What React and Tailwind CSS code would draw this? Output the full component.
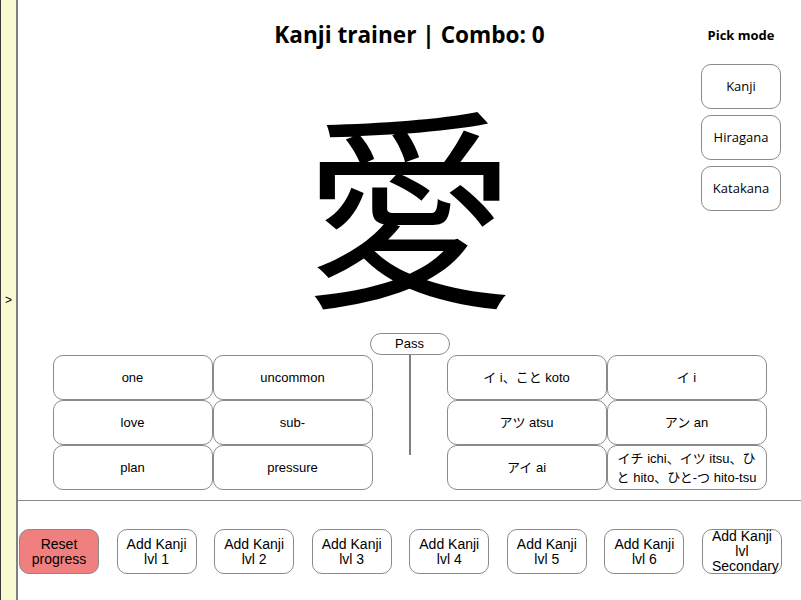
import React from "react";

const jp = { fontFamily: '"Liberation Sans", "Noto Sans CJK JP", sans-serif' };

const meanings = ["one", "uncommon", "love", "sub-", "plan", "pressure"];
const readings = [
  "イ i、こと koto",
  "イ i",
  "アツ atsu",
  "アン an",
  "アイ ai",
  "イチ ichi、イツ itsu、ひと hito、ひと-つ hito-tsu",
];
const levels = ["lvl 1", "lvl 2", "lvl 3", "lvl 4", "lvl 5", "lvl 6", "lvl Secondary"];

const AnswerGrid = ({ items }) => (
  <div className="mt-[22px] grid grid-cols-[160px_160px] auto-rows-[45px]">
    {items.map((t, i) => (
      <button
        key={i}
        className="border border-[#8a8a8a] rounded-[10px] bg-white text-[13px] leading-[19px] text-black px-1 flex items-center justify-center text-center"
        style={jp}
      >
        {t}
      </button>
    ))}
  </div>
);

export default function App() {
  return (
    <div className="flex h-[600px] w-[801px] bg-white overflow-hidden">
      <div className="w-px bg-[#3a3a3a]" />
      <aside className="w-[17px] bg-[#fafad2] border-r-2 border-[#808080] flex items-center justify-center">
        <span className="text-[12px] text-black" style={{ fontFamily: '"Liberation Sans", sans-serif' }}>&gt;</span>
      </aside>

      <main className="flex-1 flex flex-col">
        <div className="grid grid-cols-[1fr_auto_1fr] h-[333px]">
          <div />
          <div className="flex flex-col items-center">
            <h1
              className="mt-[20px] text-[22.6px] leading-[30px] font-bold text-black"
              style={{ fontFamily: '"Open Sans", sans-serif' }}
            >
              Kanji trainer | Combo: 0
            </h1>
            <div
              className="mt-[53px] text-[213px] leading-[190px] text-black"
              style={{ fontFamily: '"Noto Sans CJK JP", sans-serif' }}
            >
              愛
            </div>
          </div>
          <div className="flex flex-col items-end pr-[20px]">
            <div
              className="mt-[27px] w-[80px] text-center text-[13px] leading-[16px] font-bold text-black"
              style={{ fontFamily: '"Open Sans", sans-serif' }}
            >
              Pick mode
            </div>
            <div className="mt-[21px] flex flex-col gap-[6px]">
              {["Kanji", "Hiragana", "Katakana"].map((m) => (
                <button
                  key={m}
                  className="w-[80px] h-[45px] border border-[#8a8a8a] rounded-[10px] bg-white text-[13px] text-black"
                  style={{ fontFamily: '"Open Sans", sans-serif' }}
                >
                  {m}
                </button>
              ))}
            </div>
          </div>
        </div>

        <div className="flex justify-center items-start h-[167px]">
          <AnswerGrid items={meanings} />
          <div className="w-[74px] flex flex-col items-center">
            <button
              className="w-[80px] h-[22px] shrink-0 border border-[#8a8a8a] rounded-[11px] bg-white text-[13px] leading-[20px] text-black"
              style={jp}
            >
              Pass
            </button>
            <div className="w-[2px] h-[100px] bg-[#808080]" />
          </div>
          <AnswerGrid items={readings} />
        </div>

        <div className="h-px bg-[#8a8a8a]" />

        <div className="flex justify-between pl-px pr-[19px] mt-[28px]">
          <button
            className="w-[80px] h-[45px] border border-[#8a8a8a] rounded-[10px] bg-[#f08080] text-[14px] leading-[15px] text-black"
            style={jp}
          >
            Reset
            <br />
            progress
          </button>
          {levels.map((l) => (
            <button
              key={l}
              className="w-[80px] h-[45px] border border-[#8a8a8a] rounded-[10px] bg-white text-[14px] leading-[15px] text-black flex flex-col items-center justify-center overflow-visible"
              style={jp}
            >
              <span>Add Kanji</span>
              <span className="w-[60px]">{l}</span>
            </button>
          ))}
        </div>
      </main>
    </div>
  );
}
